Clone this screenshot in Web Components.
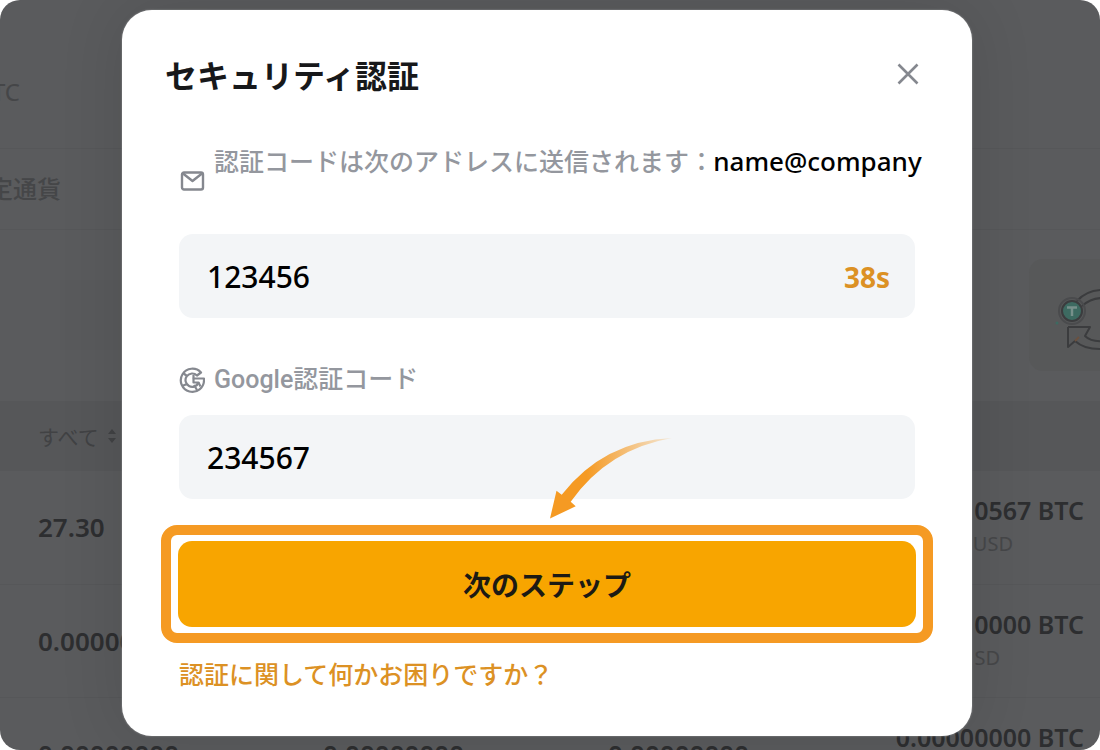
<!DOCTYPE html>
<html lang="ja">
<head>
<meta charset="utf-8">
<meta name="viewport" content="width=device-width, initial-scale=1">
<title>セキュリティ認証</title>
<style>
  body { margin: 0; background: #fff; font-family: "Noto Sans", "Noto Sans CJK JP", sans-serif; }
</style>
</head>
<body>
<app-shell>
  <wallet-page></wallet-page>
  <security-dialog slot="dialog" heading="セキュリティ認証">
    <code-field kind="mail" value="123456" timer="38s">
      <svg slot="icon" width="26" height="22" viewBox="0 0 26 22" fill="none" stroke="#85888f" stroke-width="2.4" stroke-linejoin="round"><rect x="3" y="1.500" width="21" height="17" rx="2"/><path d="M4 2.500l9.500 7.500L23 2.500"/></svg>
      認証コードは次のアドレスに送信されます：<b slot="address">name@company</b>
    </code-field>
    <code-field kind="google" value="234567">
      <svg slot="icon" width="26" height="28" viewBox="0 0 26 28" fill="none" stroke="#85888f" stroke-width="2.2"><path d="M22 6.500A11.600 11.600 0 1 0 25 14V12.500H14.500v4h5A6.700 6.700 0 1 1 18 9.500z" stroke-linejoin="round"/><path d="M4 7l4 3M3 20l5-2M18 24l-3-5M14.500 12.500V9M19.500 16.500l2 4"/></svg>
      Google認証コード
    </code-field>
    <step-button slot="action">次のステップ</step-button>
    <help-link slot="help">認証に関して何かお困りですか？</help-link>
  </security-dialog>
</app-shell>

<script>
const define = (name, html, setup) => {
  const template = document.createElement('template');
  template.innerHTML = html;
  customElements.define(name, class extends HTMLElement {
    constructor() {
      super();
      this.attachShadow({ mode: 'open' }).append(template.content.cloneNode(true));
    }
    connectedCallback() { if (setup) setup(this, this.shadowRoot); }
  });
};

define('app-shell', `
  <style>
    :host { display: block; position: relative; height: 100vh; min-height: 600px; overflow: hidden; border-radius: 20px; background: #5a5b5d; }
    .overlay { position: absolute; inset: 0; box-sizing: border-box; padding: 10px 128px 12px 122px; }
  </style>
  <slot></slot>
  <div class="overlay"><slot name="dialog"></slot></div>`);

define('wallet-page', `
  <style>
    :host { display: block; color: #2d2e30; }
    .line { box-sizing: border-box; display: flex; align-items: center; border-bottom: 1px solid #565759; font-size: 24px; line-height: 36px; color: #454648; white-space: nowrap; }
    .balance { height: 149px; padding-top: 36px; }
    .balance span { margin-left: -8px; }
    .tabs { height: 81px; font-weight: 500; }
    .tabs span { margin-left: -11px; }
    .promo { box-sizing: border-box; height: 171px; padding: 29px 0 30px 60px; display: flex; justify-content: space-between; align-items: center; }
    .banner { width: 340px; height: 70px; background: #595a5c; }
    .card { box-sizing: border-box; width: 71px; height: 112px; padding: 28px 0 0 26px; border-radius: 14px 0 0 14px; background: #575859; overflow: hidden; }
    svg { display: block; }
    table { width: 100%; table-layout: fixed; border-collapse: collapse; }
    th, td { padding: 0 0 0 38px; text-align: left; white-space: nowrap; }
    th:not(:first-child), td:not(:first-child) { padding-left: 0; }
    th:nth-child(-n+3) { width: 285px; }
    th:last-child, td:last-child { padding: 0 16px 0 0; text-align: right; }
    thead tr { height: 70px; background: #565759; }
    th { font-size: 21px; font-weight: 400; color: #414244; }
    th div { display: flex; align-items: center; gap: 8px; }
    tbody tr { height: 113px; border-bottom: 1px solid #565759; }
    td { font-size: 26px; font-weight: 600; line-height: 34px; }
    td.total { font-size: 25px; }
    td small { display: block; font-size: 20px; font-weight: 400; color: #464749; padding-right: 71px; }
    td small.short { padding-right: 84px; }
  </style>
  <div class="line balance"><span>TC</span></div>
  <div class="line tabs"><span>定通貨</span></div>
  <div class="promo">
    <div class="banner"></div>
    <div class="card">
      <svg width="60" height="66" viewBox="0 0 60 66" fill="none" stroke="#3b3c3e" stroke-width="2">
        <path d="M22 14Q32 3 48 3M27 19Q36 11 48 11"/>
        <circle cx="17" cy="24" r="13" stroke="#4a4b4d"/><circle cx="17" cy="24" r="10" fill="#3d6a61"/>
        <path d="M12 20.500h10M17 20.500V29" stroke="#77908b" stroke-width="2.500"/>
        <circle cx="2" cy="36" r="1.500" fill="#3d6a61" stroke="none"/>
        <path d="M13 40H35L30 49Q36 55 48 54M13 40V60L20 54Q30 63 48 62" stroke-linejoin="round"/>
        <path d="M20 54l4-4" stroke="#6b513f"/>
      </svg>
    </div>
  </div>
  <table>
    <thead><tr>
      <th><div>すべて<svg width="10" height="16" viewBox="0 0 10 16" fill="#414244"><path d="M5 1l4 5H1zM5 15l4-5H1z"/></svg></div></th>
      <th></th><th></th><th></th>
    </tr></thead>
    <tbody>
      <tr><td>27.30</td><td></td><td></td><td class="total">0567 BTC<small>USD</small></td></tr>
      <tr><td>0.00000</td><td></td><td></td><td class="total">0000 BTC<small class="short">SD</small></td></tr>
      <tr><td>0.00000000</td><td>0.00000000</td><td>0.00000000</td><td class="total">0.00000000 BTC<small>USD</small></td></tr>
    </tbody>
  </table>`);

define('security-dialog', `
  <style>
    :host { display: block; box-sizing: border-box; padding: 42px 57px 45px; border-radius: 30px; background: #fff; box-shadow: 0 0 2px #9a9b9d, 0 0 64px rgba(0,0,0,.12); }
    header { display: flex; justify-content: space-between; align-items: flex-start; height: 48px; margin: 0 -13px 43px -14px; }
    h1 { margin: 0; font-size: 32px; line-height: 48px; font-weight: 700; color: #17181a; }
    button { display: grid; place-items: center; width: 40px; height: 44px; padding: 0; border: 0; background: none; }
    .fields { display: grid; gap: 44px; margin-bottom: 26px; }
  </style>
  <header>
    <h1></h1>
    <button type="button" aria-label="閉じる"><svg width="22" height="22" viewBox="0 0 22 22" fill="none" stroke="#85888f" stroke-width="2.6"><path d="M1.500 1.500l19 19M20.500 1.500l-19 19"/></svg></button>
  </header>
  <div class="fields"><slot></slot></div>
  <slot name="action"></slot>
  <slot name="help"></slot>`,
  (el, root) => { root.querySelector('h1').textContent = el.getAttribute('heading'); });

define('code-field', `
  <style>
    :host { display: block; min-width: 0; }
    label { display: flex; align-items: center; gap: 9px; margin-bottom: 17px; font-family: Roboto, "Noto Sans CJK JP", sans-serif; font-size: 25px; line-height: 36px; font-weight: 500; color: #94979e; white-space: nowrap; }
    :host([kind="mail"]) label { height: 50px; margin-bottom: 41px; align-items: flex-start; }
    :host([kind="mail"]) ::slotted(svg) { align-self: flex-end; }
    ::slotted(svg) { flex: none; }
    ::slotted(b) { margin-left: -7px; font: 500 26px/36px "Noto Sans", sans-serif; color: #000; }
    .box { display: flex; align-items: center; box-sizing: border-box; height: 84px; padding: 2px 25px 0 28px; border-radius: 14px; background: #f3f5f7; }
    input { flex: 1; min-width: 0; padding: 0; border: 0; outline: 0; background: none; font: 500 30px/40px "Noto Sans", sans-serif; color: #000; }
    output { font-size: 28px; font-weight: 700; color: #dc9124; }
  </style>
  <label for="code"><slot name="icon"></slot><span><slot></slot><slot name="address"></slot></span></label>
  <div class="box"><input id="code" type="text" inputmode="numeric"><output for="code"></output></div>`,
  (el, root) => {
    root.querySelector('input').value = el.getAttribute('value');
    root.querySelector('output').textContent = el.getAttribute('timer') || '';
  });

define('step-button', `
  <style>
    :host { display: block; position: relative; margin: 0 -18px 12px; padding: 6px 7px; border: 10px solid #f59a23; border-radius: 16px; }
    button { display: block; width: 100%; height: 86px; padding: 0; border: 0; border-radius: 14px; background: #f8a500; font: 700 28px/40px "Noto Sans CJK JP", sans-serif; color: #1c1a14; }
    svg { position: absolute; left: calc(50% + 3px); bottom: calc(100% + 16px); pointer-events: none; }
  </style>
  <svg width="124" height="81" viewBox="0 0 124 81" aria-hidden="true">
    <defs><linearGradient id="fade" x1="0" x2="1"><stop offset=".3" stop-color="#f59a23"/><stop offset="1" stop-color="#f59a23" stop-opacity=".15"/></linearGradient></defs>
    <path fill="url(#fade)" d="M0 80.500L6.500 52.700L11.700 56.700Q54 3 122 0Q58 11 20.700 63.700L25.700 68.300Z"/>
  </svg>
  <button type="button"><slot></slot></button>`);

define('help-link', `
  <style>
    :host { display: block; }
    a { font-family: "Noto Sans CJK JP", sans-serif; font-size: 25px; line-height: 36px; font-weight: 500; color: #dc9124; text-decoration: none; display: inline-block; vertical-align: top; }
  </style>
  <a href="#help"><slot></slot></a>`);
</script>
</body>
</html>
